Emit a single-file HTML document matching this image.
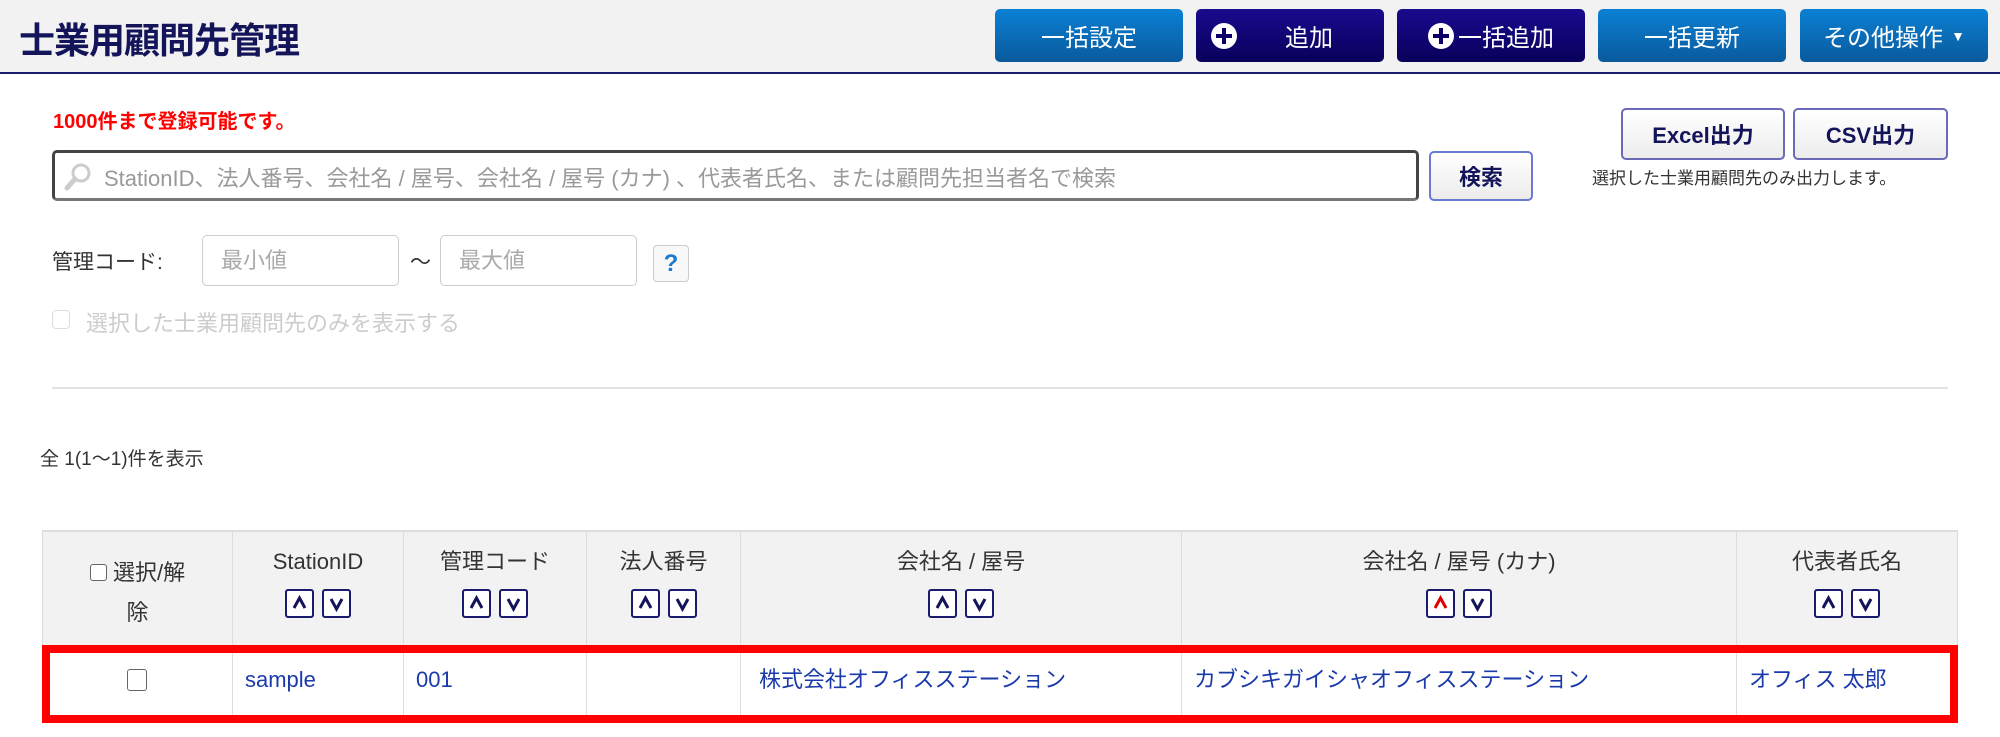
<!DOCTYPE html>
<html><head><meta charset="utf-8"><style>
*{box-sizing:border-box;margin:0;padding:0}
body{width:2000px;height:737px;background:#fff;position:relative;overflow:hidden;font-family:"Liberation Sans","Noto Sans CJK JP",sans-serif;color:#333}
.a{position:absolute}
.hdr{left:0;top:0;width:2000px;height:74px;background:#f2f2f2;border-bottom:2px solid #1a1a6e}
.title{left:19px;top:12px;font-size:36px;font-weight:bold;color:#14145a;letter-spacing:-1px}
.btn{top:9px;height:53px;width:188px;border-radius:5px;color:#fff;font-size:24px;display:flex;align-items:center;justify-content:center}
.blue{background:linear-gradient(#0a80d4,#0a5a9c)}
.navy{background:linear-gradient(#1a0a8e,#08005a)}
.plus{width:26px;height:26px;border-radius:50%;background:#fff;position:relative;display:inline-block}
.plus:before{content:"";position:absolute;left:11px;top:5px;width:4px;height:16px;background:#0c0068}
.plus:after{content:"";position:absolute;left:5px;top:11px;width:16px;height:4px;background:#0c0068}
.wbtn{border:2px solid #6a6ab8;border-radius:5px;background:linear-gradient(#fff,#ececec);color:#14145a;font-weight:bold;font-size:22px;display:flex;align-items:center;justify-content:center}
.inp{border:1px solid #ccc;border-radius:5px;height:51px;width:197px;top:235px;color:#aaa;font-size:22px;line-height:26px;padding:12px 18px}
.cell{position:absolute;border-right:1px solid #ddd;text-align:center}
.th{top:531px;height:114px;background:#f2f2f2;font-size:22px;line-height:30px;color:#333;padding-top:16px}
.srt{margin-top:12px;height:29px;line-height:0}
.sb{display:inline-block;width:29px;height:29px;border:2px solid #1a1a6e;border-radius:2px;background:#fff;margin:0 3px;vertical-align:top}
.td{top:645px;height:77px;font-size:22px;line-height:30px;color:#1a3aaa;text-align:left;padding:20px 0 0 12px}
.cb{display:inline-block;width:17px;height:17px;border:1.5px solid #666;border-radius:3px;background:#fff}
</style></head><body>
<div class="a hdr"></div>
<div class="a title">士業用顧問先管理</div>
<div class="a btn blue" style="left:995px">一括設定</div>
<div class="a btn navy" style="left:1196px;justify-content:flex-start;padding-left:15px"><span class="plus"></span><span style="margin-left:48px">追加</span></div>
<div class="a btn navy" style="left:1397px"><span class="plus" style="margin-right:4px"></span>一括追加</div>
<div class="a btn blue" style="left:1598px">一括更新</div>
<div class="a btn blue" style="left:1800px">その他操作 <span style="font-size:14px;margin-left:8px">▼</span></div>

<div class="a" style="left:53px;top:105px;font-size:20px;font-weight:bold;color:#ff0000">1000件まで登録可能です。</div>
<div class="a" style="left:52px;top:150px;width:1367px;height:51px;border:3px solid #444;border-bottom-color:#777;border-radius:5px;background:#fff"></div>
<svg class="a" style="left:63px;top:162px" width="30" height="30" viewBox="0 0 30 30"><circle cx="18" cy="11" r="8" fill="none" stroke="#ccc" stroke-width="3"/><path d="M12 17 L4 26" stroke="#ccc" stroke-width="5" stroke-linecap="round"/></svg>
<div class="a" style="left:104px;top:161px;font-size:22px;color:#999;white-space:nowrap">StationID、法人番号、会社名 / 屋号、会社名 / 屋号 (カナ) 、代表者氏名、または顧問先担当者名で検索</div>
<div class="a wbtn" style="left:1429px;top:151px;width:104px;height:50px;border-color:#6a7ad0">検索</div>
<div class="a wbtn" style="left:1621px;top:108px;width:164px;height:52px">Excel出力</div>
<div class="a wbtn" style="left:1793px;top:108px;width:155px;height:52px">CSV出力</div>
<div class="a" style="left:1592px;top:164px;font-size:17px;color:#333;white-space:nowrap">選択した士業用顧問先のみ出力します。</div>

<div class="a" style="left:52px;top:246px;font-size:21px">管理コード:</div>
<div class="a inp" style="left:202px">最小値</div>
<div class="a" style="left:410px;top:246px;font-size:21px">～</div>
<div class="a inp" style="left:440px">最大値</div>
<div class="a" style="left:653px;top:245px;width:36px;height:37px;border:1px solid #ccc;border-radius:4px;background:#f8f8f8;color:#1a7ad0;font-weight:bold;font-size:24px;text-align:center;line-height:35px">?</div>
<div class="a" style="left:52px;top:310px;width:18px;height:19px;border:1.5px solid #ddd;border-radius:4px"></div>
<div class="a" style="left:86px;top:306px;font-size:22px;color:#ccc">選択した士業用顧問先のみを表示する</div>
<div class="a" style="left:52px;top:387px;width:1896px;height:2px;background:#e2e2e2"></div>

<div class="a" style="left:40px;top:444px;font-size:19px;color:#333">全 1(1～1)件を表示</div>

<div class="cell th" style="left:42px;width:191px;border-left:1px solid #ddd;padding-top:22px;line-height:40px"><span class="cb" style="vertical-align:-1px"></span> 選択/解<br>除</div>
<div class="cell th" style="left:233px;width:171px">StationID<div class="srt"><svg width="72" height="29" viewBox="0 0 72 29"><g fill="#fff" stroke="#1a1a6e" stroke-width="2"><rect x="4" y="1" width="27" height="27" rx="2"/><rect x="41" y="1" width="27" height="27" rx="2"/></g><g fill="none" stroke="#14145a" stroke-width="3"><path d="M12 19 L17.5 9 L23 19"/><path d="M49 10 L54.5 20 L60 10"/></g></svg></div></div>
<div class="cell th" style="left:404px;width:183px">管理コード<div class="srt"><svg width="72" height="29" viewBox="0 0 72 29"><g fill="#fff" stroke="#1a1a6e" stroke-width="2"><rect x="4" y="1" width="27" height="27" rx="2"/><rect x="41" y="1" width="27" height="27" rx="2"/></g><g fill="none" stroke="#14145a" stroke-width="3"><path d="M12 19 L17.5 9 L23 19"/><path d="M49 10 L54.5 20 L60 10"/></g></svg></div></div>
<div class="cell th" style="left:587px;width:154px">法人番号<div class="srt"><svg width="72" height="29" viewBox="0 0 72 29"><g fill="#fff" stroke="#1a1a6e" stroke-width="2"><rect x="4" y="1" width="27" height="27" rx="2"/><rect x="41" y="1" width="27" height="27" rx="2"/></g><g fill="none" stroke="#14145a" stroke-width="3"><path d="M12 19 L17.5 9 L23 19"/><path d="M49 10 L54.5 20 L60 10"/></g></svg></div></div>
<div class="cell th" style="left:741px;width:441px">会社名 / 屋号<div class="srt"><svg width="72" height="29" viewBox="0 0 72 29"><g fill="#fff" stroke="#1a1a6e" stroke-width="2"><rect x="4" y="1" width="27" height="27" rx="2"/><rect x="41" y="1" width="27" height="27" rx="2"/></g><g fill="none" stroke="#14145a" stroke-width="3"><path d="M12 19 L17.5 9 L23 19"/><path d="M49 10 L54.5 20 L60 10"/></g></svg></div></div>
<div class="cell th" style="left:1182px;width:555px">会社名 / 屋号 (カナ)<div class="srt"><svg width="72" height="29" viewBox="0 0 72 29"><g fill="#fff" stroke="#1a1a6e" stroke-width="2"><rect x="4" y="1" width="27" height="27" rx="2"/><rect x="41" y="1" width="27" height="27" rx="2"/></g><g fill="none" stroke-width="3"><path d="M12 19 L17.5 9 L23 19" stroke="#e00000"/><path d="M49 10 L54.5 20 L60 10" stroke="#14145a"/></g></svg></div></div>
<div class="cell th" style="left:1737px;width:221px">代表者氏名<div class="srt"><svg width="72" height="29" viewBox="0 0 72 29"><g fill="#fff" stroke="#1a1a6e" stroke-width="2"><rect x="4" y="1" width="27" height="27" rx="2"/><rect x="41" y="1" width="27" height="27" rx="2"/></g><g fill="none" stroke="#14145a" stroke-width="3"><path d="M12 19 L17.5 9 L23 19"/><path d="M49 10 L54.5 20 L60 10"/></g></svg></div></div>
<div class="a" style="left:42px;top:530px;width:1916px;height:2px;background:#ddd"></div>

<div class="cell td" style="left:42px;width:191px;text-align:center;padding:24px 0 0"><span class="cb" style="width:20px;height:22px"></span></div>
<div class="cell td" style="left:233px;width:171px">sample</div>
<div class="cell td" style="left:404px;width:183px">001</div>
<div class="cell td" style="left:587px;width:154px"></div>
<div class="cell td" style="left:741px;width:441px;padding-left:18px">株式会社オフィスステーション</div>
<div class="cell td" style="left:1182px;width:555px">カブシキガイシャオフィスステーション</div>
<div class="cell td" style="left:1737px;width:221px;border-right:none">オフィス 太郎</div>
<div class="a" style="left:42px;top:645px;width:1916px;height:78px;border:8px solid #ff0000"></div>
</body></html>
